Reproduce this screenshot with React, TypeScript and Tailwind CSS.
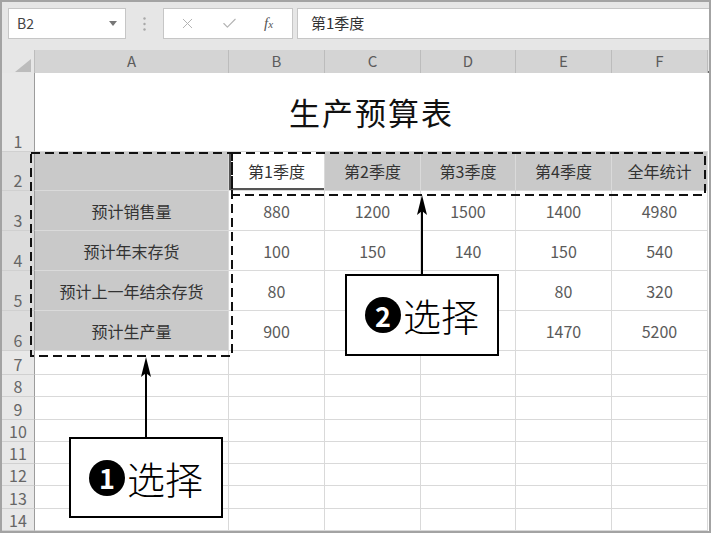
import { Fragment } from "react";
import { X, Check } from "lucide-react";

const cols = ["A", "B", "C", "D", "E", "F"];

const heads = ["第2季度", "第3季度", "第4季度", "全年统计"];

// C5:D6 sit under the second callout, so they are left blank
const rows = [
  ["预计销售量", "880", "1200", "1500", "1400", "4980"],
  ["预计年末存货", "100", "150", "140", "150", "540"],
  ["预计上一年结余存货", "80", "", "", "80", "320"],
  ["预计生产量", "900", "", "", "1470", "5200"],
];

const font = "font-['Noto_Sans_CJK_SC','Noto_Sans',sans-serif]";

function RowHead({ n, sel }: { n: number; sel?: boolean }) {
  return (
    <div
      className={`flex items-end justify-center border-r border-b border-r-[#9c9c9c] border-b-[#d0d0d0] text-[16px] leading-[20px] text-[#666] ${
        sel ? "bg-[#dcdcdc]" : "bg-[#e8e8e8]"
      }`}
    >
      {n}
    </div>
  );
}

function Callout({ num, className }: { num: string; className: string }) {
  return (
    <div
      className={`absolute flex items-center justify-center gap-[2px] border-2 border-black bg-white ${className}`}
    >
      <span className="flex h-[36px] w-[36px] items-center justify-center rounded-full bg-black text-[27px] font-bold leading-none text-white">
        {num}
      </span>
      <span className="text-[38px] font-light leading-none text-black">选择</span>
    </div>
  );
}

export default function App() {
  return (
    <div className={`relative h-[533px] w-[711px] overflow-hidden ${font}`}>
      <div className="flex h-full w-full flex-col border-2 border-[#a3a3a3] bg-[#e6e6e6]">
        {/* formula bar */}
        <div className="flex h-[48px] shrink-0 items-start pt-[6px] pl-[6px]">
          <div className="flex h-[31px] w-[118px] items-center justify-between border border-[#c6c6c6] bg-white pl-[8px] pr-[8px] text-[14px] text-[#444]">
            <span>B2</span>
            <svg width="8" height="5" viewBox="0 0 8 5">
              <path d="M0 0h8L4 5z" fill="#777" />
            </svg>
          </div>
          <div className="flex h-[31px] w-[37px] items-center justify-center">
            <svg width="3" height="14" viewBox="0 0 3 14">
              <circle cx="1.5" cy="1.5" r="1.2" fill="#a8a8a8" />
              <circle cx="1.5" cy="7" r="1.2" fill="#a8a8a8" />
              <circle cx="1.5" cy="12.5" r="1.2" fill="#a8a8a8" />
            </svg>
          </div>
          <div className="flex h-[31px] w-[130px] items-center border border-[#c6c6c6] bg-white pl-[15px]">
            <X size={17} strokeWidth={1.4} color="#b3b3b3" />
            <Check size={17} strokeWidth={1.6} color="#b3b3b3" className="ml-[25px]" />
            <span className="ml-[26px] font-['Liberation_Serif',serif] text-[15px] italic text-[#555]">
              f<span className="text-[11px]">x</span>
            </span>
          </div>
          <div className="ml-[4px] flex h-[31px] flex-1 items-center border border-r-0 border-[#c6c6c6] bg-white pl-[13px] text-[15px] text-[#333]">
            第1季度
          </div>
        </div>

        {/* column headers */}
        <div className="grid h-[23px] shrink-0 grid-cols-[33px_194px_96px_96px_95px_96px_96px] border-b-2 border-[#6e6e6e]">
          <div className="flex items-end justify-end border-r border-[#bdbdbd] bg-[#e6e6e6] pr-[3px] pb-[1px]">
            <svg width="16" height="13" viewBox="0 0 16 13">
              <path d="M16 0V13H0z" fill="#bcbcbc" />
            </svg>
          </div>
          {cols.map((c) => (
            <div
              key={c}
              className="flex items-center justify-center border-r border-[#bcbcbc] bg-[#d4d4d4] text-[15px] text-[#5c5c5c]"
            >
              {c}
            </div>
          ))}
        </div>

        {/* sheet */}
        <div className="grid flex-1 grid-cols-[33px_194px_96px_96px_95px_96px_96px] grid-rows-[79px_39px_40px_40px_40px_40px_24px_repeat(7,1fr)] bg-white">
          <RowHead n={1} />
          <div className="col-span-6 flex items-center justify-center border-b border-[#d9d9d9] text-[31px] tracking-[2px] text-[#111]">
            生产预算表
          </div>

          <RowHead n={2} sel />
          <div className="border-r border-b border-[#dadada] bg-[#c9c9c9]" />
          <div className="flex items-center justify-center border-r border-b border-[#dadada] bg-white text-[16px] text-[#333] shadow-[inset_2px_-2px_0_#555]">
            第1季度
          </div>
          {heads.map((h) => (
            <div
              key={h}
              className="flex items-center justify-center border-r border-b border-[#dadada] bg-[#c9c9c9] text-[16px] text-[#333]"
            >
              {h}
            </div>
          ))}

          {rows.map((r, i) => (
            <Fragment key={`row${i}`}>
              <RowHead n={i + 3} sel />
              {r.map((v, j) => (
                <div
                  key={j}
                  className={`flex items-center justify-center border-r border-b border-[#dadada] text-[16px] ${
                    j === 0 ? "bg-[#c9c9c9] text-[#333]" : "bg-white text-[#5a5a5a]"
                  }`}
                >
                  {v}
                </div>
              ))}
            </Fragment>
          ))}

          {[7, 8, 9, 10, 11, 12, 13, 14].map((n) => (
            <Fragment key={`r${n}`}>
              <RowHead n={n} />
              {cols.map((c) => (
                <div key={c} className="border-r border-b border-[#d9d9d9]" />
              ))}
            </Fragment>
          ))}
        </div>
      </div>

      {/* selection marquees and arrows */}
      <svg
        className="pointer-events-none absolute left-0 top-0"
        width="711"
        height="533"
        viewBox="0 0 711 533"
      >
        <g fill="none" stroke="#111" strokeWidth="2" strokeDasharray="9 5">
          <rect x="31" y="153" width="201" height="203" />
          <rect x="232" y="153" width="473" height="42" />
        </g>
        <line x1="146" y1="437" x2="146" y2="368" stroke="#000" strokeWidth="2" />
        <path d="M146 357L151 377L146 373L141 377z" fill="#000" />
        <line x1="422" y1="274" x2="422" y2="206" stroke="#000" strokeWidth="2" />
        <path d="M422 195L427 215L422 211L417 215z" fill="#000" />
      </svg>

      <Callout num="1" className="left-[69px] top-[437px] h-[81px] w-[154px]" />
      <Callout num="2" className="left-[345px] top-[274px] h-[82px] w-[154px]" />
    </div>
  );
}
